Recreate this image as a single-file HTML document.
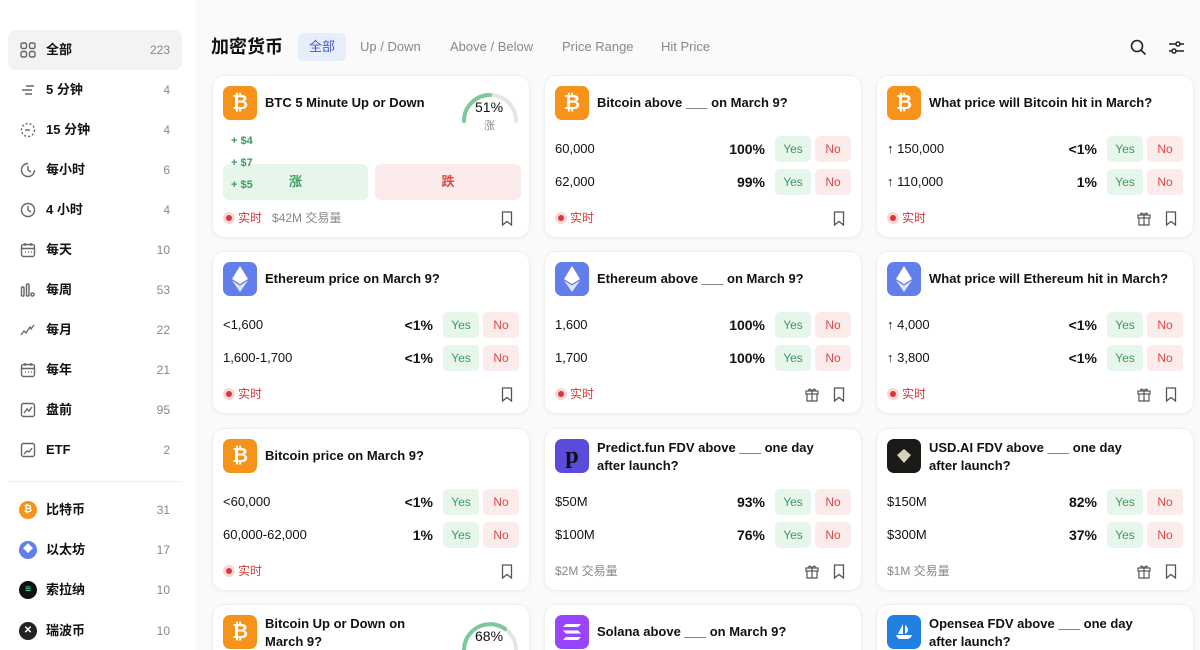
<!DOCTYPE html>
<html style="width:1200px;height:650px;overflow:hidden"><head><meta charset="utf-8"><style>
*{box-sizing:border-box;margin:0;padding:0}
body{width:1200px;height:650px;overflow:hidden;background:#fafafa;font-family:"Liberation Sans","Noto Sans CJK SC",sans-serif;color:#111;position:relative}
.side{position:absolute;left:0;top:0;width:196px;height:650px;background:#fff}
.it{position:absolute;left:8px;width:174px;height:40px;border-radius:8px;font-size:13px;font-weight:bold;line-height:18px}
.it.act{background:#f2f3f5}
.it .ic{position:absolute;left:12px;top:12px;width:16px;height:16px}
.it .lb{position:absolute;left:38px;top:11px;line-height:18px}
.it .ct{position:absolute;right:12px;top:11px;font-weight:normal;color:#888;font-size:12px;line-height:18px}
.coin{position:absolute;left:11px;top:11px;width:18px;height:18px;border-radius:50%;color:#fff;font-size:10px;text-align:center;line-height:18px;font-weight:bold}
.main{position:absolute;left:196px;top:0;width:1004px;height:650px;background:#fafafa}
h1{position:absolute;left:15px;top:36px;font-size:18px;font-weight:bold;line-height:22px}
.tab{position:absolute;top:33px;height:28px;line-height:28px;font-size:13px;color:#888}
.card{position:absolute;width:318px;height:163px;background:#fff;border:1px solid #efefef;border-radius:12px;box-shadow:0 1px 4px rgba(0,0,0,.04)}
.lg{position:absolute;left:10px;top:10px;width:34px;height:34px;border-radius:7px;display:flex;align-items:center;justify-content:center}
.tt{position:absolute;left:52px;top:18px;font-size:13px;font-weight:bold;line-height:18px;width:260px;white-space:nowrap}
.tt.two{top:10px}
.row{position:absolute;left:10px;right:10px;height:26px;font-size:13px;line-height:26px}
.r1{top:60px}.r2{top:93px}
.row .pc{position:absolute;right:86px;font-weight:bold;font-size:14px}
.y,.n{position:absolute;top:0;width:36px;height:26px;border-radius:5px;text-align:center;font-size:12px}
.y{right:40px;background:#e6f6ea;color:#3a9a5a}
.n{right:0;background:#fcebeb;color:#d84a4a}
.ft{position:absolute;left:10px;top:133px;font-size:12px;color:#888;line-height:18px}
.live{color:#d83a3a}
.dot{display:inline-block;width:12px;height:12px;border-radius:50%;background:#fbd6d6;vertical-align:-2px;margin-right:3px;position:relative}
.dot:after{content:"";position:absolute;left:3px;top:3px;width:6px;height:6px;border-radius:50%;background:#e03535}
.bm{position:absolute;right:16px;top:135px}
.gf{position:absolute;right:42px;top:135px}
</style></head><body>
<div class="side">
<div class="it act" style="top:30px"><svg class="ic" viewBox="0 0 16 16" fill="none" stroke="#666" stroke-width="1.4"><rect x="1" y="1" width="5.5" height="5.5" rx="1.5"/><rect x="9.5" y="1" width="5.5" height="5.5" rx="1.5"/><rect x="1" y="9.5" width="5.5" height="5.5" rx="1.5"/><rect x="9.5" y="9.5" width="5.5" height="5.5" rx="1.5"/></svg><span class="lb">全部</span><span class="ct">223</span></div>
<div class="it" style="top:70px"><svg class="ic" viewBox="0 0 16 16" stroke="#666" stroke-width="1.4"><path d="M6 4h8M2 8h10M5 12h7"/></svg><span class="lb">5 分钟</span><span class="ct">4</span></div>
<div class="it" style="top:110px"><svg class="ic" viewBox="0 0 16 16" fill="none" stroke="#666" stroke-width="1.4" stroke-dasharray="2 2"><circle cx="8" cy="8" r="6.5"/><path d="M5 8h5" stroke-dasharray="none"/></svg><span class="lb">15 分钟</span><span class="ct">4</span></div>
<div class="it" style="top:150px"><svg class="ic" viewBox="0 0 16 16" fill="none" stroke="#666" stroke-width="1.4"><path d="M14.5 8A6.5 6.5 0 1 1 8 1.5"/><path d="M8 4v4l3 2"/></svg><span class="lb">每小时</span><span class="ct">6</span></div>
<div class="it" style="top:190px"><svg class="ic" viewBox="0 0 16 16" fill="none" stroke="#666" stroke-width="1.4"><circle cx="8" cy="8" r="6.5"/><path d="M8 4v4l3 2"/></svg><span class="lb">4 小时</span><span class="ct">4</span></div>
<div class="it" style="top:230px"><svg class="ic" viewBox="0 0 16 16" fill="none" stroke="#666" stroke-width="1.4"><rect x="1.5" y="2.5" width="13" height="12" rx="2"/><path d="M1.5 6.5h13M5 1v3M11 1v3M5 10h1M8 10h1M11 10h1"/></svg><span class="lb">每天</span><span class="ct">10</span></div>
<div class="it" style="top:270px"><svg class="ic" viewBox="0 0 16 16" fill="none" stroke="#666" stroke-width="1.4"><rect x="1.5" y="5" width="2.5" height="9" rx="1"/><rect x="6.5" y="2" width="2.5" height="12" rx="1"/><circle cx="12.5" cy="12.5" r="1.6"/></svg><span class="lb">每周</span><span class="ct">53</span></div>
<div class="it" style="top:310px"><svg class="ic" viewBox="0 0 16 16" fill="none" stroke="#666" stroke-width="1.3"><path d="M1 13l3-4 2 2 4-6 1 2 3-4"/></svg><span class="lb">每月</span><span class="ct">22</span></div>
<div class="it" style="top:350px"><svg class="ic" viewBox="0 0 16 16" fill="none" stroke="#666" stroke-width="1.4"><rect x="1.5" y="2.5" width="13" height="12" rx="2"/><path d="M1.5 6.5h13M5 1v3M11 1v3M5 10h1M8 10h1M11 10h1"/></svg><span class="lb">每年</span><span class="ct">21</span></div>
<div class="it" style="top:390px"><svg class="ic" viewBox="0 0 16 16" fill="none" stroke="#666" stroke-width="1.4"><rect x="1.5" y="1.5" width="13" height="13" rx="2"/><path d="M4 11l3-4 2 2 3-4"/></svg><span class="lb">盘前</span><span class="ct">95</span></div>
<div class="it" style="top:430px"><svg class="ic" viewBox="0 0 16 16" fill="none" stroke="#666" stroke-width="1.4"><rect x="1.5" y="1.5" width="13" height="13" rx="2"/><path d="M4 12l3-3 2 1 3-4"/></svg><span class="lb">ETF</span><span class="ct">2</span></div>
<div style="position:absolute;left:8px;top:481px;width:174px;height:1px;background:#eee"></div>
<div class="it" style="top:490px"><span class="coin" style="background:#f7931a">₿</span><span class="lb">比特币</span><span class="ct">31</span></div>
<div class="it" style="top:530px"><span class="coin" style="background:#627eea">◆</span><span class="lb">以太坊</span><span class="ct">17</span></div>
<div class="it" style="top:570px"><span class="coin" style="background:#111;color:#5fd">≡</span><span class="lb">索拉纳</span><span class="ct">10</span></div>
<div class="it" style="top:611px"><span class="coin" style="background:#222">✕</span><span class="lb">瑞波币</span><span class="ct">10</span></div>
</div>

<div class="main">
<h1>加密货币</h1>
<div class="tab" style="left:102px;width:48px;background:#e8edfb;color:#3a5bd0;border-radius:6px;text-align:center">全部</div>
<div class="tab" style="left:164px">Up / Down</div>
<div class="tab" style="left:254px">Above / Below</div>
<div class="tab" style="left:366px">Price Range</div>
<div class="tab" style="left:465px">Hit Price</div>
<svg style="position:absolute;left:934px;top:39px" width="17" height="17" viewBox="0 0 17 17" fill="none" stroke="#222" stroke-width="1.6"><circle cx="7" cy="7" r="5.5"/><path d="M11 11l4.5 4.5"/></svg>
<svg style="position:absolute;left:972px;top:39px" width="17" height="17" viewBox="0 0 17 17" fill="none" stroke="#222" stroke-width="1.5"><path d="M1 5h15M1 12h15"/><circle cx="10" cy="5" r="2" fill="#fff"/><circle cx="6" cy="12" r="2" fill="#fff"/></svg>
</div>

<!-- row1 -->
<div class="card" style="left:212px;top:75px">
 <div class="lg" style="background:#f7931a"><span style="color:#fff;font-weight:bold;font-size:20px">₿</span></div>
 <div class="tt">BTC 5 Minute Up or Down</div>
 <svg style="position:absolute;left:246px;top:7px" width="62" height="50" viewBox="0 0 62 50" fill="none" stroke-width="4" stroke-linecap="round"><path d="M5 38A26 26 0 0 1 57 38" stroke="#e5e5e5"/><path d="M5 38A26 26 0 0 1 31 12" stroke="#7cc89a"/></svg>
 <div style="position:absolute;left:262px;top:23px;font-size:14px">51%</div>
 <div style="position:absolute;left:271px;top:41px;font-size:11px;color:#888">涨</div>
 <div style="position:absolute;left:10px;top:88px;width:145px;height:36px;background:#e6f6ea;border-radius:6px;color:#3a9a5a;text-align:center;line-height:36px;font-size:13px;font-weight:bold">涨</div>
 <div style="position:absolute;left:162px;top:88px;width:146px;height:36px;background:#fcebeb;border-radius:6px;color:#d84a4a;text-align:center;line-height:36px;font-size:13px;font-weight:bold">跌</div>
 <div style="position:absolute;left:18px;top:54px;font-size:11px;color:#3a9a5a;line-height:22px;font-weight:bold">+ $4<br>+ $7<br>+ $5</div>
 <div class="ft"><span class="live"><span class="dot"></span>实时</span>&nbsp;&nbsp; $42M 交易量</div>
 <svg class="bm" width="12" height="15" viewBox="0 0 12 15" fill="none" stroke="#555" stroke-width="1.3"><path d="M1.5 1h9v13l-4.5-3.5L1.5 14z"/></svg>
</div>
<div class="card" style="left:544px;top:75px">
 <div class="lg" style="background:#f7931a"><span style="color:#fff;font-weight:bold;font-size:20px">₿</span></div>
 <div class="tt">Bitcoin above ___ on March 9?</div>
 <div class="row r1">60,000<span class="pc">100%</span><span class="y">Yes</span><span class="n">No</span></div>
 <div class="row r2">62,000<span class="pc">99%</span><span class="y">Yes</span><span class="n">No</span></div>
 <div class="ft"><span class="live"><span class="dot"></span>实时</span></div>
 <svg class="bm" width="12" height="15" viewBox="0 0 12 15" fill="none" stroke="#555" stroke-width="1.3"><path d="M1.5 1h9v13l-4.5-3.5L1.5 14z"/></svg>
</div>
<div class="card" style="left:876px;top:75px">
 <div class="lg" style="background:#f7931a"><span style="color:#fff;font-weight:bold;font-size:20px">₿</span></div>
 <div class="tt">What price will Bitcoin hit in March?</div>
 <div class="row r1">↑ 150,000<span class="pc">&lt;1%</span><span class="y">Yes</span><span class="n">No</span></div>
 <div class="row r2">↑ 110,000<span class="pc">1%</span><span class="y">Yes</span><span class="n">No</span></div>
 <div class="ft"><span class="live"><span class="dot"></span>实时</span></div>
 <svg class="gf" width="14" height="15" viewBox="0 0 14 15" fill="none" stroke="#555" stroke-width="1.2"><rect x="1" y="4" width="12" height="3"/><path d="M2 7v7h10V7M7 4v10M7 4C5 1 3 2 4 4M7 4c2-3 4-2 3 0"/></svg>
 <svg class="bm" width="12" height="15" viewBox="0 0 12 15" fill="none" stroke="#555" stroke-width="1.3"><path d="M1.5 1h9v13l-4.5-3.5L1.5 14z"/></svg>
</div>

<!-- row2 -->
<div class="card" style="left:212px;top:251px">
 <div class="lg" style="background:#627eea"><svg width="16" height="26" viewBox="0 0 16 26"><path d="M8 0L0 13l8 5 8-5z" fill="#fff"/><path d="M8 19.5L0 14.5 8 26l8-11.5z" fill="#dfe5fb"/></svg></div>
 <div class="tt">Ethereum price on March 9?</div>
 <div class="row r1">&lt;1,600<span class="pc">&lt;1%</span><span class="y">Yes</span><span class="n">No</span></div>
 <div class="row r2">1,600-1,700<span class="pc">&lt;1%</span><span class="y">Yes</span><span class="n">No</span></div>
 <div class="ft"><span class="live"><span class="dot"></span>实时</span></div>
 <svg class="bm" width="12" height="15" viewBox="0 0 12 15" fill="none" stroke="#555" stroke-width="1.3"><path d="M1.5 1h9v13l-4.5-3.5L1.5 14z"/></svg>
</div>
<div class="card" style="left:544px;top:251px">
 <div class="lg" style="background:#627eea"><svg width="16" height="26" viewBox="0 0 16 26"><path d="M8 0L0 13l8 5 8-5z" fill="#fff"/><path d="M8 19.5L0 14.5 8 26l8-11.5z" fill="#dfe5fb"/></svg></div>
 <div class="tt">Ethereum above ___ on March 9?</div>
 <div class="row r1">1,600<span class="pc">100%</span><span class="y">Yes</span><span class="n">No</span></div>
 <div class="row r2">1,700<span class="pc">100%</span><span class="y">Yes</span><span class="n">No</span></div>
 <div class="ft"><span class="live"><span class="dot"></span>实时</span></div>
 <svg class="gf" width="14" height="15" viewBox="0 0 14 15" fill="none" stroke="#555" stroke-width="1.2"><rect x="1" y="4" width="12" height="3"/><path d="M2 7v7h10V7M7 4v10M7 4C5 1 3 2 4 4M7 4c2-3 4-2 3 0"/></svg>
 <svg class="bm" width="12" height="15" viewBox="0 0 12 15" fill="none" stroke="#555" stroke-width="1.3"><path d="M1.5 1h9v13l-4.5-3.5L1.5 14z"/></svg>
</div>
<div class="card" style="left:876px;top:251px">
 <div class="lg" style="background:#627eea"><svg width="16" height="26" viewBox="0 0 16 26"><path d="M8 0L0 13l8 5 8-5z" fill="#fff"/><path d="M8 19.5L0 14.5 8 26l8-11.5z" fill="#dfe5fb"/></svg></div>
 <div class="tt">What price will Ethereum hit in March?</div>
 <div class="row r1">↑ 4,000<span class="pc">&lt;1%</span><span class="y">Yes</span><span class="n">No</span></div>
 <div class="row r2">↑ 3,800<span class="pc">&lt;1%</span><span class="y">Yes</span><span class="n">No</span></div>
 <div class="ft"><span class="live"><span class="dot"></span>实时</span></div>
 <svg class="gf" width="14" height="15" viewBox="0 0 14 15" fill="none" stroke="#555" stroke-width="1.2"><rect x="1" y="4" width="12" height="3"/><path d="M2 7v7h10V7M7 4v10M7 4C5 1 3 2 4 4M7 4c2-3 4-2 3 0"/></svg>
 <svg class="bm" width="12" height="15" viewBox="0 0 12 15" fill="none" stroke="#555" stroke-width="1.3"><path d="M1.5 1h9v13l-4.5-3.5L1.5 14z"/></svg>
</div>

<!-- row3 -->
<div class="card" style="left:212px;top:428px">
 <div class="lg" style="background:#f7931a"><span style="color:#fff;font-weight:bold;font-size:20px">₿</span></div>
 <div class="tt">Bitcoin price on March 9?</div>
 <div class="row r1">&lt;60,000<span class="pc">&lt;1%</span><span class="y">Yes</span><span class="n">No</span></div>
 <div class="row r2">60,000-62,000<span class="pc">1%</span><span class="y">Yes</span><span class="n">No</span></div>
 <div class="ft"><span class="live"><span class="dot"></span>实时</span></div>
 <svg class="bm" width="12" height="15" viewBox="0 0 12 15" fill="none" stroke="#555" stroke-width="1.3"><path d="M1.5 1h9v13l-4.5-3.5L1.5 14z"/></svg>
</div>
<div class="card" style="left:544px;top:428px">
 <div class="lg" style="background:#5b4bdb"><span style="color:#111;font-weight:bold;font-size:24px;font-family:'Liberation Serif',serif">p</span></div>
 <div class="tt two">Predict.fun FDV above ___ one day<br>after launch?</div>
 <div class="row r1">$50M<span class="pc">93%</span><span class="y">Yes</span><span class="n">No</span></div>
 <div class="row r2">$100M<span class="pc">76%</span><span class="y">Yes</span><span class="n">No</span></div>
 <div class="ft">$2M 交易量</div>
 <svg class="gf" width="14" height="15" viewBox="0 0 14 15" fill="none" stroke="#555" stroke-width="1.2"><rect x="1" y="4" width="12" height="3"/><path d="M2 7v7h10V7M7 4v10M7 4C5 1 3 2 4 4M7 4c2-3 4-2 3 0"/></svg>
 <svg class="bm" width="12" height="15" viewBox="0 0 12 15" fill="none" stroke="#555" stroke-width="1.3"><path d="M1.5 1h9v13l-4.5-3.5L1.5 14z"/></svg>
</div>
<div class="card" style="left:876px;top:428px">
 <div class="lg" style="background:#1a1a16"><svg width="16" height="16" viewBox="0 0 16 16"><path d="M8 1L1 7l7 8 7-8z" fill="#d8d2bc"/></svg></div>
 <div class="tt two">USD.AI FDV above ___ one day<br>after launch?</div>
 <div class="row r1">$150M<span class="pc">82%</span><span class="y">Yes</span><span class="n">No</span></div>
 <div class="row r2">$300M<span class="pc">37%</span><span class="y">Yes</span><span class="n">No</span></div>
 <div class="ft">$1M 交易量</div>
 <svg class="gf" width="14" height="15" viewBox="0 0 14 15" fill="none" stroke="#555" stroke-width="1.2"><rect x="1" y="4" width="12" height="3"/><path d="M2 7v7h10V7M7 4v10M7 4C5 1 3 2 4 4M7 4c2-3 4-2 3 0"/></svg>
 <svg class="bm" width="12" height="15" viewBox="0 0 12 15" fill="none" stroke="#555" stroke-width="1.3"><path d="M1.5 1h9v13l-4.5-3.5L1.5 14z"/></svg>
</div>

<!-- row4 -->
<div class="card" style="left:212px;top:604px;height:60px">
 <div class="lg" style="background:#f7931a"><span style="color:#fff;font-weight:bold;font-size:20px">₿</span></div>
 <div class="tt two">Bitcoin Up or Down on<br>March 9?</div>
 <svg style="position:absolute;left:246px;top:7px" width="62" height="50" viewBox="0 0 62 50" fill="none" stroke-width="4" stroke-linecap="round"><path d="M5 38A26 26 0 0 1 57 38" stroke="#e5e5e5"/><path d="M5 38A26 26 0 0 1 46 17" stroke="#7cc89a"/></svg>
 <div style="position:absolute;left:262px;top:23px;font-size:14px">68%</div>
</div>
<div class="card" style="left:544px;top:604px;height:60px">
 <div class="lg" style="background:#9945ff"><svg width="20" height="18" viewBox="0 0 20 18" fill="#fff"><path d="M4 1h15l-3 3H1zM1 7.5h15l3 3H4zM4 14h15l-3 3H1z"/></svg></div>
 <div class="tt">Solana above ___ on March 9?</div>
</div>
<div class="card" style="left:876px;top:604px;height:60px">
 <div class="lg" style="background:#2081e2"><svg width="20" height="18" viewBox="0 0 20 18" fill="#fff"><path d="M9 1l-5 10h5zM11 2c4 3 4 7 0 9zM2 12h16c-1 3-3 4-5 4H6c-2 0-3-2-4-4z"/></svg></div>
 <div class="tt two">Opensea FDV above ___ one day<br>after launch?</div>
</div>
</body></html>
